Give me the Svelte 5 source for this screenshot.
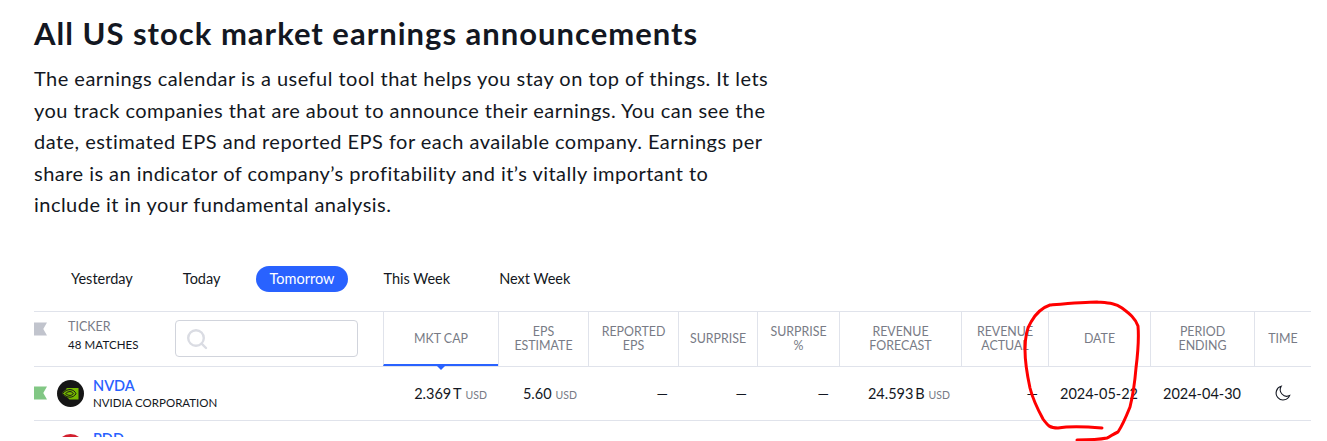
<script>
  const tabs = ["Yesterday", "Today", "Tomorrow", "This Week", "Next Week"];
  const heads = [
    ["MKT CAP"], ["EPS", "ESTIMATE"], ["REPORTED", "EPS"], ["SURPRISE"], ["SURPRISE", "%"],
    ["REVENUE", "FORECAST"], ["REVENUE", "ACTUAL"], ["DATE"], ["PERIOD", "ENDING"], ["TIME"]
  ];
</script>

<main class="page">
  <h1>All US stock market earnings announcements</h1>
  <p class="intro">
    The earnings calendar is a useful tool that helps you stay on top of things. It lets<br />
    you track companies that are about to announce their earnings. You can see the<br />
    date, estimated EPS and reported EPS for each available company. Earnings per<br />
    share is an indicator of company’s profitability and it’s vitally important to<br />
    include it in your fundamental analysis.
  </p>

  <nav class="tabs">
    {#each tabs as tab}
      <span class="tab" class:active={tab === "Tomorrow"}>{tab}</span>
    {/each}
  </nav>

  <section class="table">
    <div class="row head">
      <div class="ticker-head">
        <svg class="flag" viewBox="0 0 14 14"><path d="M0 0H14L10 7L14 14H0Z" fill="#c1c4cd" /></svg>
        <div class="ticker-label">
          <span class="label">TICKER</span>
          <span class="matches">48 MATCHES</span>
        </div>
        <div class="search">
          <svg viewBox="0 0 22 22" width="22" height="22" fill="none" stroke="#dadce3" stroke-width="2.4">
            <circle cx="10" cy="10" r="7.8" />
            <path d="M15.6 15.6L20 20" stroke-linecap="round" />
          </svg>
        </div>
      </div>
      {#each heads as lines, i}
        <div class="th" class:sorted={i === 0}>
          {#each lines as line}<span>{line}</span>{/each}
        </div>
      {/each}
    </div>

    <div class="row body">
      <div class="ticker">
        <svg class="flag" viewBox="0 0 14 14"><path d="M0 0H14L10 7L14 14H0Z" fill="#81c784" /></svg>
        <svg class="logo" viewBox="0 0 27 27">
          <circle cx="13.5" cy="13.5" r="13.5" fill="#161616" />
          <path d="M9.5 8H21.5V19.5H12.5L10.5 17.5C8.5 17 6.5 15.5 5 13.6C6.5 11.5 8 10 9.5 9.3Z" fill="#76b900" />
          <path d="M5.5 13.6C8 10.6 10.5 9.6 13 9.6C16 9.6 18.2 11.6 19 13.8C17.6 15.8 15.5 17.2 13 17.2C10.2 17.2 8 15.8 5.5 13.6Z" fill="none" stroke="#161616" stroke-width="1" />
          <path d="M8.6 13.6C10 12.2 11.5 11.6 13 11.6C14.6 11.6 15.8 12.6 16.3 13.8C15.3 14.9 14.2 15.4 13 15.4C11.4 15.4 10 14.7 8.6 13.6Z" fill="none" stroke="#161616" stroke-width="1" />
        </svg>
        <div class="names">
          <span class="symbol">NVDA</span>
          <span class="company">NVIDIA CORPORATION</span>
        </div>
      </div>
      <div class="td">2.369&thinsp;T<small>USD</small></div>
      <div class="td">5.60<small>USD</small></div>
      <div class="td">—</div>
      <div class="td">—</div>
      <div class="td">—</div>
      <div class="td">24.593&thinsp;B<small>USD</small></div>
      <div class="td">—</div>
      <div class="td center">2024-05-22</div>
      <div class="td center">2024-04-30</div>
      <div class="td moon">
        <svg viewBox="0 0 18 18" width="18" height="18" fill="none" stroke="#131722" stroke-width="1.1">
          <path d="M7.2 2.2A7 7 0 1 0 15.6 11.6A6.6 6.6 0 0 1 7.2 2.2Z" />
        </svg>
      </div>
    </div>

    <div class="row next">
      <div class="ticker">
        <span class="flag-gap"></span>
        <svg class="logo" viewBox="0 0 27 27"><circle cx="13.5" cy="13.5" r="13.5" fill="#d2202f" /></svg>
        <div class="names"><span class="symbol">PDD</span></div>
      </div>
    </div>
  </section>

  <!-- hand drawn marker ring around the date column -->
  <svg class="scribble" viewBox="0 0 1327 441" width="1327" height="441" fill="none" stroke="#f00" stroke-width="3" stroke-linecap="round" stroke-linejoin="round">
    <path d="M1102 428C1090 427 1070 426 1058 428C1050 428 1048 426 1043 419C1037 408 1033 400 1030 388C1027 374 1025 360 1025 350C1025 338 1027 328 1031 322C1036 313 1041 308 1050 305C1062 304 1085 302 1097 302C1108 303 1115 303 1122 308C1130 314 1135 318 1138 326C1139 338 1138 352 1136 368C1135 380 1133 395 1130 407C1126 417 1122 426 1118 432C1113 434 1110 437 1107 438C1097 440 1085 440 1077 440" />
  </svg>
</main>

<style>
  :global(body) {
    margin: 0;
    background: #fff;
    overflow: hidden;
  }

  .page {
    position: relative;
    height: 441px;
    overflow: hidden;
    box-sizing: border-box;
    padding: 13px 16px 0 34px;
    font-family: Lato, "Noto Sans", sans-serif;
    color: #131722;
  }

  h1 {
    margin: 0;
    font-size: 31px;
    line-height: 40px;
    font-weight: 700;
    letter-spacing: 1px;
  }

  .intro {
    margin: 0;
    padding-top: 10px;
    font-size: 20px;
    line-height: 31.5px;
    letter-spacing: 0.47px;
  }

  .tabs {
    display: flex;
    align-items: center;
    height: 26px;
    margin-top: 45px;
    padding-left: 23px;
    font-size: 14.5px;
  }

  .tab {
    padding: 0 14px;
    margin-right: 21px;
    line-height: 26px;
    border-radius: 13px;
    white-space: nowrap;
  }

  .tab:first-child {
    margin-right: 22px;
  }

  .active {
    background: #2962ff;
    color: #fff;
  }

  .table {
    margin-top: 19px;
    border-top: 1px solid #e0e3eb;
  }

  .row {
    display: grid;
    grid-template-columns: 349px 115px 90px 90px 79px 82px 122px 87px 102px 104px 57px;
    border-bottom: 1px solid #e0e3eb;
  }

  .head {
    height: 54px;
    align-items: stretch;
  }

  .body {
    height: 53px;
    align-items: center;
  }

  /* the capture cuts this row off a few pixels below its top */
  .next {
    border-bottom: 0;
    height: 16px;
    overflow: hidden;
    align-items: start;
  }

  .ticker-head {
    display: flex;
    align-items: center;
  }

  .flag {
    width: 13px;
    height: 14px;
    flex: none;
  }

  .flag-gap {
    width: 13px;
    flex: none;
  }

  .ticker-head .flag {
    margin-top: -20px;
  }

  .ticker-label {
    display: flex;
    flex-direction: column;
    width: 107px;
    margin-left: 21px;
    line-height: 18px;
    margin-top: -5px;
  }

  .label {
    font-size: 12.5px;
    color: #787b86;
  }

  .matches {
    font-size: 11.5px;
    letter-spacing: 0.1px;
  }

  .search {
    box-sizing: border-box;
    width: 183px;
    height: 37px;
    padding: 7px 0 0 10px;
    border: 1px solid #d1d4dc;
    border-radius: 4px;
  }

  .search svg {
    display: block;
  }

  .th {
    position: relative;
    box-sizing: border-box;
    display: flex;
    flex-direction: column;
    align-items: center;
    justify-content: center;
    border-left: 1px solid #e0e3eb;
    font-size: 12.4px;
    line-height: 14px;
    color: #787b86;
  }

  .sorted {
    padding-top: 2px;
    border-bottom: 2px solid #2962ff;
  }

  .sorted::after {
    content: "";
    position: absolute;
    left: 50%;
    bottom: -6px;
    margin-left: -4px;
    border: 4px solid transparent;
    border-bottom: 0;
    border-top-color: #2962ff;
  }

  .ticker {
    display: flex;
    align-items: center;
  }

  .logo {
    width: 27px;
    height: 27px;
    margin-left: 10px;
    flex: none;
  }

  .names {
    display: flex;
    flex-direction: column;
    margin-left: 9px;
  }

  .symbol {
    font-size: 14.5px;
    line-height: 19px;
    font-weight: 600;
    color: #2962ff;
  }

  .company {
    font-size: 11.5px;
    line-height: 16px;
  }

  .next .ticker {
    align-items: flex-start;
    padding-top: 13px;
  }

  .next .names {
    margin-top: -5px;
  }

  .td {
    padding-right: 10px;
    text-align: right;
    font-size: 14.5px;
    white-space: nowrap;
  }

  .center {
    padding-right: 0;
    text-align: center;
  }

  small {
    margin: 0 1px 0 4px;
    font-size: 10.5px;
    color: #787b86;
  }

  .moon {
    display: flex;
    justify-content: center;
    padding-right: 0;
  }

  .scribble {
    position: absolute;
    left: 0;
    top: 0;
    pointer-events: none;
  }
</style>
